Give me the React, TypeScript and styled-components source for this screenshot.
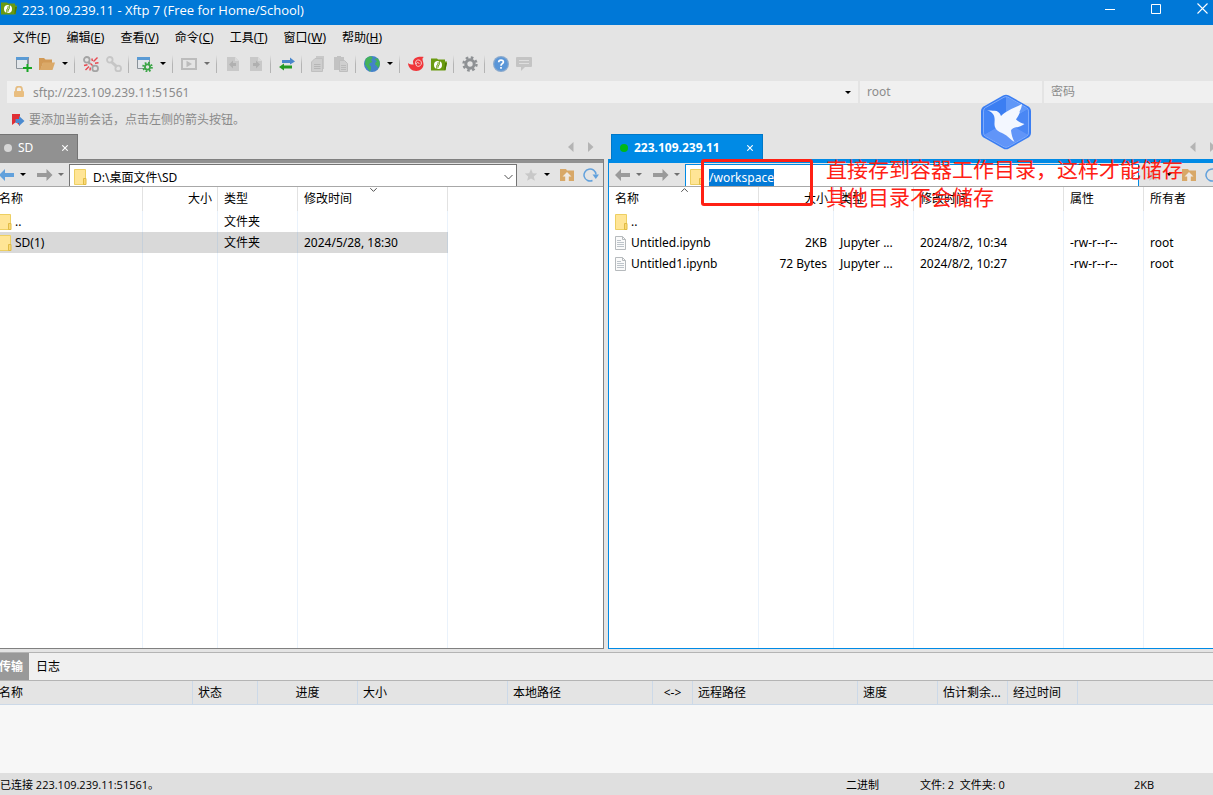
import React, { useEffect, useRef } from 'react';
import styled, { createGlobalStyle, css } from 'styled-components';

const GlobalStyle = createGlobalStyle`
  * { box-sizing: border-box; }
  body {
    margin: 0;
    overflow: hidden;
    background: #e4e4e4;
    color: #000;
    font: 12px/16px "Noto Sans", "Noto Sans CJK SC", sans-serif;
  }
  button, input {
    margin: 0;
    padding: 0;
    border: 0;
    border-radius: 0;
    background: none;
    color: inherit;
    font: inherit;
    outline: none;
  }
  svg { display: block; flex: none; }
`;

const Shell = styled.div`
  position: relative;
  display: flex;
  flex-direction: column;
  height: 100vh;
  min-height: 480px;
`;

const TitleBar = styled.header`
  display: flex;
  align-items: flex-start;
  height: 25px;
  padding-left: 1px;
  background: #0078d7;
  color: #fff;
`;

const Title = styled.h1`
  flex: 1;
  margin: 1px 0 0 5px;
  font-family: "Open Sans", sans-serif;
  font-size: 13px;
  font-weight: 400;
  line-height: 18px;
`;

const WindowButton = styled.button`
  display: flex;
  justify-content: center;
  width: 46px;
  height: 18px;
  padding-top: 3px;
  &:last-child {
    width: 34px;
    padding-left: 12px;
  }
`;

const MenuBar = styled.nav`
  display: flex;
  gap: 16px;
  height: 25px;
  padding-left: 13px;
  align-items: center;
`;

const ToolBar = styled.div`
  display: flex;
  align-items: center;
  height: 29px;
  padding: 0 0 2px 8px;
`;

const ToolGroup = styled.div`
  display: flex;
  gap: 7px;
  padding: 0 6px 0 8px;
`;

const ToolSeparator = styled.span`
  width: 1px;
  height: 18px;
  background: linear-gradient(#e4e4e4, #b4b4b4 50%, #b4b4b4);
`;

const SplitButton = styled.span`
  display: flex;
`;

const ToolButton = styled.button`
  width: 16px;
  height: 16px;
`;

const CaretButton = styled.button<{ $tone?: string; $w?: number }>`
  display: flex;
  align-items: center;
  justify-content: center;
  width: ${p => p.$w ?? 16}px;
  height: 16px;
  color: ${p => p.$tone ?? '#000'};
`;

const ToolCaret = styled(CaretButton)`
  width: 13px;
  justify-content: flex-end;
`;

const AddressBar = styled.form`
  display: flex;
  gap: 2px;
  height: 22px;
  margin: 2px 0 0 7px;
  flex: none;
`;

const Field = styled.label<{ $grow?: boolean; $w?: number }>`
  display: flex;
  align-items: center;
  width: ${p => (p.$w ? `${p.$w}px` : 'auto')};
  flex: ${p => (p.$grow ? '1' : 'none')};
  padding-left: ${p => (p.$grow ? 6 : 7)}px;
  background: #f0f0f0;
  color: #8c8c8c;
  input {
    flex: 1;
    min-width: 0;
    margin-left: ${p => (p.$grow ? 8 : 0)}px;
    padding-top: ${p => (p.$grow ? 2 : 0)}px;
  }
  input::placeholder { color: #8c8c8c; opacity: 1; }
`;

const Hint = styled.p`
  display: flex;
  align-items: center;
  gap: 4px;
  height: 31px;
  margin: 0;
  padding: 2px 0 0 11px;
  color: #8a8a8a;
  flex: none;
`;

const Workspace = styled.main`
  display: grid;
  grid-template-columns: 612fr 618fr;
  column-gap: 4px;
  flex: 1;
  min-height: 0;
  margin: 0 -13px 3px -8px;
`;

const Pane = styled.section`
  position: relative;
  display: flex;
  flex-direction: column;
  min-width: 0;
  min-height: 0;
`;

const TabStrip = styled.div`
  display: flex;
  justify-content: space-between;
  height: 25px;
  flex: none;
`;

const paneTone = (active: boolean) =>
  active ? { fill: '#008ae5', line: '#0078c8' } : { fill: '#919191', line: '#747474' };

const Tab = styled.div<{ $active: boolean; $w: number }>`
  display: flex;
  align-items: center;
  width: ${p => p.$w}px;
  height: 26px;
  margin-left: 3px;
  padding: 1px 9px 0 8px;
  z-index: 1;
  border: 1px solid ${p => paneTone(p.$active).line};
  border-bottom: 0;
  background: ${p => paneTone(p.$active).fill};
  color: #fff;
  font-weight: ${p => (p.$active ? 700 : 400)};
  button { margin-left: auto; }
`;

const Dot = styled.span<{ $color: string }>`
  width: 8px;
  height: 8px;
  margin-right: 6px;
  border-radius: 50%;
  background: ${p => p.$color};
`;

const TabArrows = styled.div`
  display: flex;
  align-items: center;
  gap: 14px;
  padding-right: 10px;
  color: #b4b4b4;
  button { width: 6px; }
`;

const PaneBody = styled.div<{ $active: boolean }>`
  display: flex;
  flex-direction: column;
  flex: 1;
  min-height: 0;
  border: 1px solid ${p => (p.$active ? '#008ae5' : '#808080')};
  background: #fff;
`;

const Band = styled.div<{ $active: boolean }>`
  height: 3px;
  flex: none;
  background: ${p => paneTone(p.$active).fill};
`;

const NavBar = styled.div`
  display: flex;
  align-items: center;
  height: 24px;
  flex: none;
  padding: 0 4px 0 6px;
  border-bottom: 1px solid #a8a8a8;
  background: #e4e4e4;
`;

const NavGroup = styled.div<{ $before?: number }>`
  display: flex;
  margin-left: ${p => p.$before ?? 0}px;
`;

const PathField = styled.label<{ $active: boolean }>`
  display: flex;
  align-items: center;
  flex: 1;
  align-self: stretch;
  margin-top: 1px;
  padding: 3px 3px 0 4px;
  border: 1px solid ${p => (p.$active ? '#008ae5' : '#747474')};
  border-bottom: 0;
  background: #fff;
  input {
    flex: 1;
    min-width: 0;
    height: 18px;
    margin-left: 6px;
  }
  input::selection { background: rgba(0, 120, 215, 0.99); color: #fff; }
`;

const ListArea = styled.div`
  flex: 1;
  min-height: 0;
`;

const FileTable = styled.table`
  width: 100%;
  height: 100%;
  table-layout: fixed;
  border-collapse: separate;
  border-spacing: 0;
`;

const cellText = css<{ $align?: string }>`
  padding: 0 6px;
  text-align: ${p => p.$align ?? 'left'};
  white-space: nowrap;
  overflow: hidden;
`;

const HeadCell = styled.th<{ $align?: string }>`
  ${cellText}
  position: relative;
  height: 24px;
  padding: 0 5px 0 6px;
  font-weight: 400;
  border-right: 1px solid #e2e2e2;
  &:last-child { border-right: 0; }
`;

const SortMark = styled.span`
  position: absolute;
  top: 1px;
  left: 50%;
  margin-left: -3px;
`;

const Row = styled.tr<{ $selected?: boolean }>`
  height: 21px;
  td { border-right: 1px solid ${p => (p.$selected ? '#c6d0da' : '#eaf2fb')}; }
  td:not(:last-child) { background: ${p => (p.$selected ? '#d9d9d9' : 'none')}; }
  td:last-child { border-right: 0; }
`;

const Cell = styled.td<{ $align?: string }>`
  ${cellText}
`;

const NameBox = styled.span`
  display: flex;
  align-items: center;
  gap: 3px;
`;

const Transfers = styled.section`
  margin: 0 -13px 0 -8px;
  flex: none;
  border-top: 1px solid #b4b4b4;
  background: #f7f7f7;
`;

const BottomTabs = styled.div`
  display: flex;
  height: 28px;
  border-bottom: 1px solid #b4b4b4;
  background: #f0f0f0;
`;

const BottomTab = styled.button<{ $active?: boolean }>`
  padding: 0 6px 0 7px;
  background: ${p => (p.$active ? '#999' : 'none')};
  color: ${p => (p.$active ? '#fff' : '#000')};
  font-weight: ${p => (p.$active ? 700 : 400)};
`;

const TransferTable = styled.table`
  width: 100%;
  margin-bottom: 68px;
  table-layout: fixed;
  border-collapse: separate;
  border-spacing: 0;
  background: #e4e4e4;
`;

const TransferHead = styled.th<{ $align?: string }>`
  ${cellText}
  height: 24px;
  padding: 0 5px;
  font-weight: 400;
  border-right: 1px solid #ccd9e8;
  border-bottom: 1px solid #ccd9e8;
  &:first-child { padding-left: 7px; }
  &:last-child { border-right: 0; }
`;

const StatusBar = styled.footer`
  display: flex;
  align-items: center;
  height: 22px;
  padding-top: 1px;
  flex: none;
  background: #dfdfdf;
  font-family: "Open Sans", "Noto Sans CJK SC", sans-serif;
  font-size: 11px;
`;

const StatusItem = styled.span<{ $w?: number }>`
  width: ${p => (p.$w ? `${p.$w}px` : 'auto')};
  flex: ${p => (p.$w ? 'none' : '1')};
  white-space: pre;
`;

const FloatingLogo = styled.div`
  position: absolute;
  top: 94px;
  right: 182px;
`;

const Marker = styled.div`
  position: absolute;
  top: 25px;
  left: 93px;
  width: 112px;
  height: 47px;
  border: 3px solid #ff2014;
  border-radius: 3px;
  z-index: 2;
`;

const MarkerNote = styled.p`
  position: absolute;
  top: 21px;
  left: 218px;
  margin: 0;
  z-index: 2;
  color: #ff2014;
  font-size: 21px;
  line-height: 28px;
  white-space: nowrap;
`;

const Caret = () => (
  <svg width="6" height="3" viewBox="0 0 6 3"><path d="M0 0h6L3 3z" fill="currentColor" /></svg>
);

const XftpMark = () => (
  <svg width="16" height="16" viewBox="0 0 16 16">
    <path d="M0 2.500h6l1 1h7v2h2l-1.500 9H0z" fill="#6a9a10" />
    <path d="M14 7h2l-1.600 7h-1z" fill="#4e7a00" />
    <circle cx="7" cy="9" r="4" fill="#fff" />
    <path d="M5.800 13.500V9.800a1.200 1.200 0 0 1 1.200-1.200V6.200M8.300 4.500v4a1.200 1.200 0 0 1-1.200 1.200v2" fill="none" stroke="#6a9a10" strokeWidth="1" />
  </svg>
);

const NewSession = () => (
  <svg width="16" height="16" viewBox="0 0 16 16">
    <path d="M.5 2v10.500h11V2z" fill="#e2e6ea" stroke="#8a9299" />
    <path d="M0 1h13v3H0z" fill="#5a9bd5" />
    <path d="M12.500 2v6" stroke="#8a9299" />
    <path d="M11.500 8v8M7 12h9" stroke="#19a526" strokeWidth="2" />
  </svg>
);

const OpenFolder = () => (
  <svg width="16" height="16" viewBox="0 0 16 16">
    <path d="M0 2h5l1.500 1.500H13V7H4l-2.500 7H0z" fill="#d29a56" />
    <path d="M4 6.500h12L13.500 14H1z" fill="#dba968" />
  </svg>
);

const Links = ({ broken }: { broken?: boolean }) => {
  const tone = broken ? '#a4a4a4' : '#c6c6c6';
  return (
    <svg width="16" height="16" viewBox="0 0 16 16" fill="none" stroke={tone} strokeWidth="1.800">
      <circle cx="3.800" cy="3.800" r="2.800" />
      <circle cx="12.200" cy="12.400" r="2.800" />
      {broken ? (
        <>
          <path d="M5.500 6L7 8M9.500 9.500l1 1" strokeWidth="2.400" />
          <path d="M8.800 2.500l.7 2.500M14.500 1.500l-4 4M15.500 6.800L12 7.300M1 9.500l3.500-.8M2.500 14l3.500-3.500M7 14.500l.3-3M7.500 7.500l2 2" stroke="#e8474f" strokeWidth="1.400" />
        </>
      ) : (
        <path d="M5 5.500l6 5.300" strokeWidth="3" />
      )}
    </svg>
  );
};

const SessionProps = () => (
  <svg width="16" height="16" viewBox="0 0 16 16">
    <path d="M.5 2v10.500h12V2z" fill="#e2e6ea" stroke="#8a9299" />
    <path d="M0 1h13v3H0z" fill="#5a9bd5" />
    <circle cx="10.500" cy="11" r="4.300" fill="none" stroke="#3aa545" strokeWidth="2" strokeDasharray="1.700 1.680" />
    <circle cx="10.500" cy="11" r="2.600" fill="#e4e4e4" stroke="#3aa545" strokeWidth="1.800" />
  </svg>
);

const PlayBox = () => (
  <svg width="16" height="16" viewBox="0 0 16 16">
    <rect x="1" y="3" width="14" height="10" fill="none" stroke="#bcbcbc" strokeWidth="2" />
    <path d="M5.500 4.800v6.400L11 8z" fill="#bcbcbc" />
  </svg>
);

const DocArrow = ({ flip }: { flip?: boolean }) => (
  <svg width="16" height="16" viewBox="0 0 16 16">
    <path d="M2 1h8l4 4v10H2z" fill="#c8c8c8" />
    <path d="M10 1v4h4z" fill="#dadada" />
    <path d={flip ? 'M5 7h3V4.500l4 4-4 4V10H5z' : 'M11 7H8V4.500l-4 4 4 4V10h3z'} fill="#b0b0b0" />
  </svg>
);

const Transfer = () => (
  <svg width="16" height="16" viewBox="0 0 16 16">
    <path d="M3 4h8V1.500L16 5.500l-5 3V7H3z" fill="#4a86cc" />
    <path d="M13 9.500H5V7.500L0 11l5 3.500V12.500h8z" fill="#259a22" />
  </svg>
);

const CopyDocs = () => (
  <svg width="16" height="16" viewBox="0 0 16 16">
    <path d="M6 0h8v13H6z" fill="#c8c8c8" />
    <path d="M5 2.500h7.500v13H1.500V6z" fill="#cecece" stroke="#c0c0c0" />
    <path d="M4 8.500h6.500M4 10.500h6.500M4 12.500h6.500" stroke="#b6b6b6" />
  </svg>
);

const PasteDocs = () => (
  <svg width="16" height="16" viewBox="0 0 16 16">
    <path d="M1 1h3V0h4v1h3v13H1z" fill="#c2c2c2" />
    <path d="M6.500 4.500h5l3 3v8h-8z" fill="#cfcfcf" stroke="#bebebe" />
    <path d="M8 9.500h5M8 11.500h5M8 13.500h5" stroke="#bababa" />
  </svg>
);

const Globe = () => (
  <svg width="16" height="16" viewBox="0 0 16 16">
    <circle cx="8" cy="8" r="8" fill="#4482c8" />
    <path d="M1.500 3.300C3 1.300 5 .3 7.200.2L8.800 2 7 4l1.500 2-2.500 1-1 2 2 1.500v2.500L6 15.700 3.500 12 1 8.500z" fill="#43b25a" />
    <path d="M10.500 3l3-.8c1.500 1.500 2.400 3.300 2.300 5.800-.2 1.500-.7 3-1.800 4.200l-1-2.200-2-1.500.5-2L13 5.500z" fill="#43b25a" />
  </svg>
);

const XshellSwirl = () => (
  <svg width="16" height="16" viewBox="0 0 16 16">
    <path d="M16 1C11 0 5 1.500 5 6c0 1 .3 1.800.7 2.500C3 8.500 1 8 0 7c.3 4.500 3.600 8 8.300 8 4.200 0 7.200-3 7.200-6.500C15.500 5 13 2.500 16 1z" fill="#f0363a" />
    <path d="M7.600 8.200C7 5 9 3.600 11 4c2 .5 2.800 2.500 2.200 4.300-.8 2-3.200 2.600-4.600 1.500-1-1-.6-2.800.8-3.200 1-.2 1.800.5 1.600 1.400" fill="none" stroke="#f6dada" strokeWidth=".9" />
  </svg>
);

const Gear = () => (
  <svg width="16" height="16" viewBox="0 0 16 16" fill="none" stroke="#8e9194">
    <circle cx="8" cy="8" r="6.500" strokeWidth="2.400" strokeDasharray="2.600 2.505" />
    <circle cx="8" cy="8" r="4.200" strokeWidth="3" />
  </svg>
);

const Help = () => (
  <svg width="16" height="16" viewBox="0 0 16 16">
    <circle cx="8" cy="8" r="8" fill="#8aa9cc" />
    <circle cx="8" cy="8" r="6.800" fill="#5a96d8" />
    <path d="M5.700 6.300c0-3 4.700-2.900 4.700-.3C10.400 7.700 8 7.700 8 9.700M8 11v1.800" fill="none" stroke="#fff" strokeWidth="1.700" />
  </svg>
);

const Chat = () => (
  <svg width="16" height="16" viewBox="0 0 16 16">
    <path d="M1 1h14a1 1 0 0 1 1 1v8a1 1 0 0 1-1 1H9l-4 4v-4H1a1 1 0 0 1-1-1V2a1 1 0 0 1 1-1z" fill="#c4c4c4" />
    <path d="M3 4.500h10M3 7.500h10" stroke="#dedede" />
  </svg>
);

const Lock = () => (
  <svg width="12" height="12" viewBox="0 0 12 12">
    <path d="M3 6V3.500a3 3 0 0 1 6 0V6" fill="none" stroke="#e5bd83" strokeWidth="1.800" />
    <rect x="1" y="5" width="10" height="6" rx="1" fill="#e9be80" />
  </svg>
);

const HintFlag = () => (
  <svg width="14" height="14" viewBox="0 0 14 14">
    <path d="M1 1h8v12L5 9l-4 3z" fill="#e02f35" />
    <path d="M4.500 6H8V3l5.500 5L8 13v-3H4.500z" fill="#4a8ad0" />
  </svg>
);

const BigArrow = ({ tone, right }: { tone: string; right?: boolean }) => (
  <svg width="16" height="14" viewBox="0 0 16 14">
    <path d={right ? 'M15.500 7L9.500 1v4H0v4h9.500v4z' : 'M0 7l6-6v4h9v4H6v4z'} fill={tone} />
  </svg>
);

const FolderIcon = () => (
  <svg width="13" height="16" viewBox="0 0 13 16">
    <path d="M.5.5h11v15H.5z" fill="#ffe596" stroke="#edcf62" />
    <path d="M9.500 9.500h2.500v6H9.500z" fill="#fbd975" stroke="#e0bb45" />
  </svg>
);

const FileIcon = () => (
  <svg width="13" height="14" viewBox="0 0 13 14">
    <path d="M.5.5h7l3 3v10H.5z" fill="#fafafa" stroke="#b6babd" />
    <path d="M7.500.5v3h3" fill="none" stroke="#b6babd" />
    <path d="M2 4.500h4M2 6.500h7M2 8.500h7M2 10.500h7" stroke="#bdc4ca" />
  </svg>
);

const Chevron = ({ up, small }: { up?: boolean; small?: boolean }) => (
  <svg width={small ? 7 : 9} height={small ? 4 : 6} viewBox={small ? '0 0 7 4' : '0 0 9 6'} fill="none" stroke="#505050">
    <path d={small ? (up ? 'M.3 3.800l3.200-3.200 3.200 3.200' : 'M.3.200l3.200 3.200L6.700.2') : 'M.5 1l4 4 4-4'} />
  </svg>
);

const Star = () => (
  <svg width="16" height="16" viewBox="0 0 16 16">
    <path d="M8 2l1.800 4.200 4.400.3-3.400 2.900 1.100 4.400L8 11.500l-3.900 2.300 1.100-4.400L1.800 6.500l4.400-.3z" fill="#c8c8c8" />
  </svg>
);

const FolderUp = () => (
  <svg width="16" height="16" viewBox="0 0 16 16">
    <path d="M1 2h6l1 1.500h7V14H1z" fill="#d8a868" />
    <path d="M8 5l4.500 4.500H9.800V15H6.200V9.500H3.500z" fill="#efe9e2" />
  </svg>
);

const Refresh = () => (
  <svg width="16" height="16" viewBox="0 0 16 16">
    <path d="M9.500 13.500A6 6 0 1 1 13 7.500" fill="none" stroke="#62a1dc" strokeWidth="1.500" />
    <path d="M9.500 7.500H16L12.800 12z" fill="#62a1dc" />
  </svg>
);

const Triangle = ({ right }: { right?: boolean }) => (
  <svg width="6" height="10" viewBox="0 0 6 10">
    <path d={right ? 'M0 0l5.500 5L0 10z' : 'M5.500 0L0 5l5.500 5z'} fill="currentColor" />
  </svg>
);

const Cross = ({ size }: { size: number }) => (
  <svg width={size} height={size} viewBox="0 0 11 11">
    <path d="M.5.5l10 10M10.500.5l-10 10" stroke="#fff" strokeWidth={12 / size} />
  </svg>
);

const BirdLogo = () => (
  <svg width="50" height="56" viewBox="0 0 50 56">
    <path d="M22 1.500a6 6 0 0 1 6 0l18.500 10.500a6 6 0 0 1 3.500 5v22a6 6 0 0 1-3.500 5L28 54.500a6 6 0 0 1-6 0L3.500 44A6 6 0 0 1 0 39V17a6 6 0 0 1 3.500-5z" fill="#3b7ef2" />
    <path d="M25 2.500l22.500 12.500L25 28z" fill="#5f97f8" />
    <path d="M25 28l22.500-13v26z" fill="#4a87f4" />
    <path d="M2.500 41L25 28l22.500 13L25 53.500z" fill="#6195f8" />
    <path d="M2.500 15L25 28 2.500 41z" fill="#4485f6" />
    <path d="M23 3.200a4 4 0 0 1 4 0L45.500 13.600a4 4 0 0 1 2 3.500v21.800a4 4 0 0 1-2 3.500L27 52.800a4 4 0 0 1-4 0L4.500 42.400a4 4 0 0 1-2-3.500V17.100a4 4 0 0 1 2-3.500z" fill="none" stroke="#7eabfb" />
    <path d="M6 16c3 .6 5 .8 7.500.8 3 0 5.500 2 6.500 5.200C26 16 34 14 41 10c-.3 3-1 5-2.500 7.500l.3.800C38 21 36.500 23 35 25.500c2.500 2 5 3.500 8.500 4.500-3 2-6 3.300-9.500 3.500-2 .5-3.500 1.500-4 3 .5 4 1.500 8 3.500 11.500C30 46 27 42 22 39.500c-4-2-7-3-8.200-7-.8-3 .2-5.500-.3-8.500C13 20 10.500 17.800 6 16z" fill="#f3f7ff" />
  </svg>
);

const menus = [['文件', 'F'], ['编辑', 'E'], ['查看', 'V'], ['命令', 'C'], ['工具', 'T'], ['窗口', 'W'], ['帮助', 'H']];

type Tool = { label: string; icon: React.ReactNode; caret?: string };
const toolGroups: Tool[][] = [
  [{ label: '新建', icon: <NewSession /> }, { label: '打开', icon: <OpenFolder />, caret: '#000' }],
  [{ label: '断开', icon: <Links broken /> }, { label: '重新连接', icon: <Links /> }],
  [{ label: '属性', icon: <SessionProps />, caret: '#000' }],
  [{ label: '运行', icon: <PlayBox />, caret: '#6e6e6e' }],
  [{ label: '向左传输', icon: <DocArrow /> }, { label: '向右传输', icon: <DocArrow flip /> }],
  [{ label: '同步', icon: <Transfer /> }],
  [{ label: '复制', icon: <CopyDocs /> }, { label: '粘贴', icon: <PasteDocs /> }],
  [{ label: '编码', icon: <Globe />, caret: '#000' }],
  [{ label: 'Xshell', icon: <XshellSwirl /> }, { label: 'Xftp', icon: <XftpMark /> }],
  [{ label: '选项', icon: <Gear /> }],
  [{ label: '帮助', icon: <Help /> }, { label: '反馈', icon: <Chat /> }],
];

type Column = { title: string; width?: number; align?: string; sort?: 'up' | 'down' };
type Entry = { cells: string[]; kind: 'folder' | 'file'; selected?: boolean };

const localColumns: Column[] = [
  { title: '名称', width: 150 },
  { title: '大小', width: 75, align: 'right' },
  { title: '类型', width: 80 },
  { title: '修改时间', width: 150, sort: 'down' },
  { title: '' },
];
const localEntries: Entry[] = [
  { kind: 'folder', cells: ['..', '', '文件夹', '', ''] },
  { kind: 'folder', cells: ['SD(1)', '', '文件夹', '2024/5/28, 18:30', ''], selected: true },
];
const remoteColumns: Column[] = [
  { title: '名称', width: 150, sort: 'up' },
  { title: '大小', width: 75, align: 'right' },
  { title: '类型', width: 80 },
  { title: '修改时间', width: 150 },
  { title: '属性', width: 80 },
  { title: '所有者' },
];
const remoteEntries: Entry[] = [
  { kind: 'folder', cells: ['..', '', '', '', '', ''] },
  { kind: 'file', cells: ['Untitled.ipynb', '2KB', 'Jupyter ...', '2024/8/2, 10:34', '-rw-r--r--', 'root'] },
  { kind: 'file', cells: ['Untitled1.ipynb', '72 Bytes', 'Jupyter ...', '2024/8/2, 10:27', '-rw-r--r--', 'root'] },
];

const transferColumns: Column[] = [
  { title: '名称', width: 201 },
  { title: '状态', width: 65 },
  { title: '进度', width: 100, align: 'center' },
  { title: '大小', width: 150 },
  { title: '本地路径', width: 145 },
  { title: '<->', width: 40, align: 'center' },
  { title: '远程路径', width: 165 },
  { title: '速度', width: 80 },
  { title: '估计剩余...', width: 70 },
  { title: '经过时间', width: 70 },
  { title: '' },
];

const FileList = ({ columns, entries }: { columns: Column[]; entries: Entry[] }) => (
  <ListArea>
    <FileTable>
      <colgroup>
        {columns.map((c, i) => <col key={i} width={c.width} />)}
      </colgroup>
      <thead>
        <tr>
          {columns.map((c, i) => (
            <HeadCell key={i} $align={c.align}>
              {c.title}
              {c.sort && <SortMark><Chevron small up={c.sort === 'up'} /></SortMark>}
            </HeadCell>
          ))}
        </tr>
      </thead>
      <tbody>
        {entries.map((e, r) => (
          <Row key={r} $selected={e.selected}>
            {e.cells.map((text, i) => (
              <Cell key={i} $align={columns[i].align}>
                {i === 0 ? <NameBox>{e.kind === 'folder' ? <FolderIcon /> : <FileIcon />}{text}</NameBox> : text}
              </Cell>
            ))}
          </Row>
        ))}
        <Row style={{ height: 'auto' }}>
          {columns.map((_, i) => <Cell key={i} />)}
        </Row>
      </tbody>
    </FileTable>
  </ListArea>
);

type PaneProps = {
  active: boolean;
  name: string;
  tabWidth: number;
  path: string;
  columns: Column[];
  entries: Entry[];
  children?: React.ReactNode;
};

const FilePane = ({ active, name, tabWidth, path, columns, entries, children }: PaneProps) => {
  const pathRef = useRef<HTMLInputElement>(null);
  useEffect(() => {
    if (active && pathRef.current) {
      pathRef.current.focus();
      pathRef.current.select();
    }
  }, [active]);
  return (
    <Pane>
      <TabStrip>
        <Tab $active={active} $w={tabWidth}>
          <Dot $color={active ? '#00b818' : '#d6d6d6'} />
          {name}
          <button aria-label="关闭标签"><Cross size={6} /></button>
        </Tab>
        <TabArrows>
          <button aria-label="上一个标签"><Triangle /></button>
          <button aria-label="下一个标签"><Triangle right /></button>
        </TabArrows>
      </TabStrip>
      <PaneBody $active={active}>
        <Band $active={active} />
        <NavBar>
          <NavGroup>
            <button aria-label="后退"><BigArrow tone={active ? '#9a9a9a' : '#62a1dc'} /></button>
            <CaretButton aria-label="后退历史" $tone={active ? '#707070' : '#000'}><Caret /></CaretButton>
          </NavGroup>
          <NavGroup $before={6}>
            <button aria-label="前进"><BigArrow right tone="#9a9a9a" /></button>
            <CaretButton aria-label="前进历史" $tone="#707070"><Caret /></CaretButton>
          </NavGroup>
          <PathField $active={active}>
            <FolderIcon />
            <input ref={pathRef} aria-label="路径" defaultValue={path} />
            <Chevron />
          </PathField>
          <NavGroup $before={6}>
            <button aria-label="收藏"><Star /></button>
            <CaretButton aria-label="收藏列表"><Caret /></CaretButton>
          </NavGroup>
          <NavGroup $before={4}>
            <button aria-label="上级目录"><FolderUp /></button>
          </NavGroup>
          <NavGroup $before={8}>
            <button aria-label="刷新"><Refresh /></button>
          </NavGroup>
        </NavBar>
        <FileList columns={columns} entries={entries} />
      </PaneBody>
      {children}
    </Pane>
  );
};

export default function App() {
  return (
    <>
      <GlobalStyle />
      <Shell>
        <TitleBar>
          <XftpMark />
          <Title>223.109.239.11 - Xftp 7 (Free for Home/School)</Title>
          <WindowButton aria-label="最小化">
            <svg width="11" height="11" viewBox="0 0 11 11"><path d="M0 6.500h10" stroke="#fff" /></svg>
          </WindowButton>
          <WindowButton aria-label="最大化">
            <svg width="11" height="11" viewBox="0 0 11 11"><path d="M.5 1.500h9v9h-9z" fill="none" stroke="#fff" /></svg>
          </WindowButton>
          <WindowButton aria-label="关闭"><Cross size={11} /></WindowButton>
        </TitleBar>
        <MenuBar>
          {menus.map(([name, key]) => (
            <button key={key}>{name}(<u>{key}</u>)</button>
          ))}
        </MenuBar>
        <ToolBar>
          {toolGroups.map((group, g) => (
            <React.Fragment key={g}>
              {g > 0 && <ToolSeparator />}
              <ToolGroup>
                {group.map(tool => (
                  <SplitButton key={tool.label}>
                    <ToolButton aria-label={tool.label}>{tool.icon}</ToolButton>
                    {tool.caret && <ToolCaret aria-label={`${tool.label}选项`} $tone={tool.caret}><Caret /></ToolCaret>}
                  </SplitButton>
                ))}
              </ToolGroup>
            </React.Fragment>
          ))}
        </ToolBar>
        <AddressBar>
          <Field $grow>
            <Lock />
            <input aria-label="地址" defaultValue="sftp://223.109.239.11:51561" />
            <CaretButton type="button" aria-label="地址历史" $w={20}><Caret /></CaretButton>
          </Field>
          <Field $w={182}><input aria-label="用户名" defaultValue="root" /></Field>
          <Field $w={169}><input type="password" aria-label="密码" placeholder="密码" /></Field>
        </AddressBar>
        <Hint><HintFlag />要添加当前会话，点击左侧的箭头按钮。</Hint>
        <Workspace>
          <FilePane active={false} name="SD" tabWidth={83} path="D:\桌面文件\SD" columns={localColumns} entries={localEntries} />
          <FilePane active name="223.109.239.11" tabWidth={152} path="/workspace" columns={remoteColumns} entries={remoteEntries}>
            <Marker />
            <MarkerNote>直接存到容器工作目录，这样才能储存<br />其他目录不会储存</MarkerNote>
          </FilePane>
        </Workspace>
        <Transfers>
          <BottomTabs>
            <BottomTab $active>传输</BottomTab>
            <BottomTab>日志</BottomTab>
          </BottomTabs>
          <TransferTable>
            <colgroup>
              {transferColumns.map((c, i) => <col key={i} width={c.width} />)}
            </colgroup>
            <thead>
              <tr>
                {transferColumns.map((c, i) => <TransferHead key={i} $align={c.align}>{c.title}</TransferHead>)}
              </tr>
            </thead>
          </TransferTable>
        </Transfers>
        <StatusBar>
          <StatusItem>已连接 223.109.239.11:51561。</StatusItem>
          <StatusItem $w={74}>二进制</StatusItem>
          <StatusItem $w={214}>文件: 2  文件夹: 0</StatusItem>
          <StatusItem $w={79}>2KB</StatusItem>
        </StatusBar>
        <FloatingLogo><BirdLogo /></FloatingLogo>
      </Shell>
    </>
  );
}
